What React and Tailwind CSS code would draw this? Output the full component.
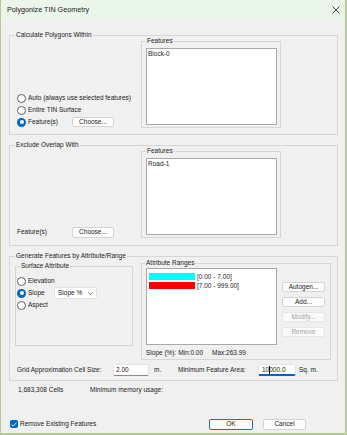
import React from "react";

// Win11-style dialog, everything at the screenshot's small scale
const font = "font-['Liberation_Sans',Arial,sans-serif]";

function Radio({ checked, label }) {
  return (
    <div className="flex h-[12px] items-center gap-[2px]">
      {checked ? (
        <span className="flex h-[9px] w-[9px] items-center justify-center rounded-full bg-[#0067c0]">
          <span className="h-[4px] w-[4px] rounded-full bg-white" />
        </span>
      ) : (
        <span className="h-[9px] w-[9px] rounded-full border border-[#5c5c5c] bg-white" />
      )}
      <span>{label}</span>
    </div>
  );
}

function Btn({ children, className = "", disabled, primary }) {
  let look = "border-[#d3d3d3] bg-[#fdfdfd] text-[#1b1b1b]";
  if (disabled) look = "border-[#e6e6e6] bg-[#fafafa] text-[#a3a3a3]";
  if (primary) look = "border-[#1d6fc1] bg-[#fdfdfd] text-[#1b1b1b]";
  return (
    <div
      className={
        "flex items-center justify-center rounded-[2px] border leading-none " +
        look +
        " " +
        className
      }
    >
      {children}
    </div>
  );
}

function Group({ title, className = "", legendClass = "ml-[5px]", children }) {
  return (
    <fieldset className={"border border-[#d6d6d6] " + className}>
      <legend className={"px-[1px] leading-[8px] " + legendClass}>{title}</legend>
      {children}
    </fieldset>
  );
}

function ListBox({ className = "", children }) {
  return (
    <div className={"border border-[#a9a9a9] bg-white " + className}>{children}</div>
  );
}

function FeaturesBox({ item }) {
  return (
    <Group title="Features" className="-mt-[2px] h-[91px] w-[140px]" legendClass="ml-[4px]">
      <ListBox className="ml-[4px] mt-[3px] h-[77px] w-[131px] pl-[1px] pt-[1px]">
        <div className="leading-[8px]">{item}</div>
      </ListBox>
    </Group>
  );
}

function TextBox({ children, focused, className = "" }) {
  return (
    <div
      className={
        "flex h-[12px] items-center rounded-[2px] border border-[#e2e2e2] bg-white " +
        (focused ? "border-b-[2px] border-b-[#0067c0] " : "border-b-[#8b8b8b] ") +
        className
      }
    >
      {children}
    </div>
  );
}

export default function App() {
  return (
    <div className={"h-[435px] w-[347px] bg-[#b8c993] text-[6.5px] leading-[8px] text-[#1b1b1b] " + font}>
      <div className="ml-[1px] flex h-[433px] w-[344px] flex-col bg-[#f0f0f0]">
        {/* title bar */}
        <div className="flex h-[20px] items-center justify-between bg-[#ebf6ea] pl-[6px] pr-[4px]">
          <span className="text-[7.2px] text-[#1a1a1a]">Polygonize TIN Geometry</span>
          <svg width="8" height="8" viewBox="0 0 8 8" className="mr-[1px]">
            <path d="M0.5 0.5 L7.5 7.5 M7.5 0.5 L0.5 7.5" stroke="#333" strokeWidth="0.9" />
          </svg>
        </div>

        <div className="flex flex-1 flex-col px-[8px] pt-[11px]">
          {/* Calculate Polygons Within */}
          <Group title="Calculate Polygons Within" className="w-[329px]">
            <div className="flex items-end pb-[6px] pl-[7px]">
              <div className="w-[124px]">
                <Radio label="Auto (always use selected features)" />
                <Radio label="Entire TIN Surface" />
                <div className="flex items-center">
                  <div className="w-[55px]">
                    <Radio checked label="Feature(s)" />
                  </div>
                  <Btn className="h-[10px] w-[42px]">Choose...</Btn>
                </div>
              </div>
              <FeaturesBox item="Block-0" />
            </div>
          </Group>

          {/* Exclude Overlap With */}
          <Group title="Exclude Overlap With" className="mt-[6px] w-[329px]">
            <div className="flex items-end pb-[7px] pl-[7px]">
              <div className="w-[124px]">
                <div className="flex h-[12px] items-center">
                  <span className="w-[55px]">Feature(s)</span>
                  <Btn className="h-[11px] w-[42px]">Choose...</Btn>
                </div>
              </div>
              <FeaturesBox item="Road-1" />
            </div>
          </Group>

          {/* Generate Features by Attribute/Range */}
          <Group title="Generate Features by Attribute/Range" className="mt-[6px] w-[329px]">
            <div className="flex items-start pl-[5px]">
              <Group title="Surface Attribute" className="mt-[2px] h-[84px] w-[118px]" legendClass="ml-[4px]">
                <div className="pl-[1px] pt-[5px]">
                  <Radio label="Elevation" />
                  <div className="flex items-center">
                    <div className="w-[37px]">
                      <Radio checked label="Slope" />
                    </div>
                    <div className="flex h-[12px] w-[43px] items-center justify-between rounded-[2px] border border-[#e3e3e3] bg-white pl-[3px] pr-[3px]">
                      <span>Slope %</span>
                      <svg width="5" height="3" viewBox="0 0 5 3">
                        <path d="M0.3 0.3 L2.5 2.5 L4.7 0.3" fill="none" stroke="#555" strokeWidth="0.7" />
                      </svg>
                    </div>
                  </div>
                  <Radio label="Aspect" />
                </div>
              </Group>

              <Group title="Attribute Ranges" className="-mt-[1px] ml-[8px] h-[101px] w-[190px]" legendClass="ml-[3px]">
                <div className="flex items-start">
                  <ListBox className="ml-[4px] mt-[1px] h-[77px] w-[131px] pl-[2px] pt-[3px]">
                    <div className="flex h-[9px] items-center gap-[2px]">
                      <span className="h-[7px] w-[46px] bg-[#00ffff]" />
                      <span>[0.00 - 7.00]</span>
                    </div>
                    <div className="flex h-[9px] items-center gap-[2px]">
                      <span className="h-[7px] w-[46px] bg-[#ff0000]" />
                      <span>[7.00 - 999.00]</span>
                    </div>
                  </ListBox>
                  <div className="ml-[5px] mt-[15px] flex flex-col gap-[5px]">
                    <Btn className="h-[10px] w-[43px]">Autogen...</Btn>
                    <Btn className="h-[10px] w-[43px]">Add...</Btn>
                    <Btn disabled className="h-[10px] w-[43px]">Modify...</Btn>
                    <Btn disabled className="h-[10px] w-[43px]">Remove</Btn>
                  </div>
                </div>
                <div className="ml-[4px] mt-[4px] flex">
                  <span className="w-[66px]">Slope (%): Min:0.00</span>
                  <span>Max:263.99</span>
                </div>
              </Group>
            </div>

            <div className="mt-[4px] flex items-center pb-[4px] pl-[7px]">
              <span className="w-[96px]">Grid Approximation Cell Size:</span>
              <TextBox className="w-[36px] pl-[2px]">2.00</TextBox>
              <span className="ml-[5px] w-[24px]">m.</span>
              <span className="w-[80px]">Minimum Feature Area:</span>
              <TextBox focused className="w-[38px] pl-[3px]">
                <span>10</span>
                <span className="-mr-[1px] h-[8px] w-[1px] bg-[#111]" />
                <span>000.0</span>
              </TextBox>
              <span className="ml-[3px]">Sq. m.</span>
            </div>
          </Group>

          <div className="mt-[5px] flex pl-[9px]">
            <span className="w-[72px]">1,683,308 Cells</span>
            <span>Minimum memory usage:</span>
          </div>

          {/* bottom row */}
          <div className="mt-auto flex h-[12px] items-center pb-0 pl-[1px] mb-[3px]">
            <div className="flex flex-1 items-center gap-[2px]">
              <span className="flex h-[8px] w-[8px] items-center justify-center rounded-[2px] bg-[#0067c0]">
                <svg width="6" height="5" viewBox="0 0 6 5">
                  <path d="M0.6 2.6 L2.2 4.1 L5.4 0.8" fill="none" stroke="#fff" strokeWidth="0.9" />
                </svg>
              </span>
              <span>Remove Existing Features</span>
            </div>
            <Btn primary className="h-[11px] w-[44px]">OK</Btn>
            <Btn className="ml-[10px] mr-[31px] h-[11px] w-[43px]">Cancel</Btn>
          </div>
        </div>
      </div>
    </div>
  );
}
